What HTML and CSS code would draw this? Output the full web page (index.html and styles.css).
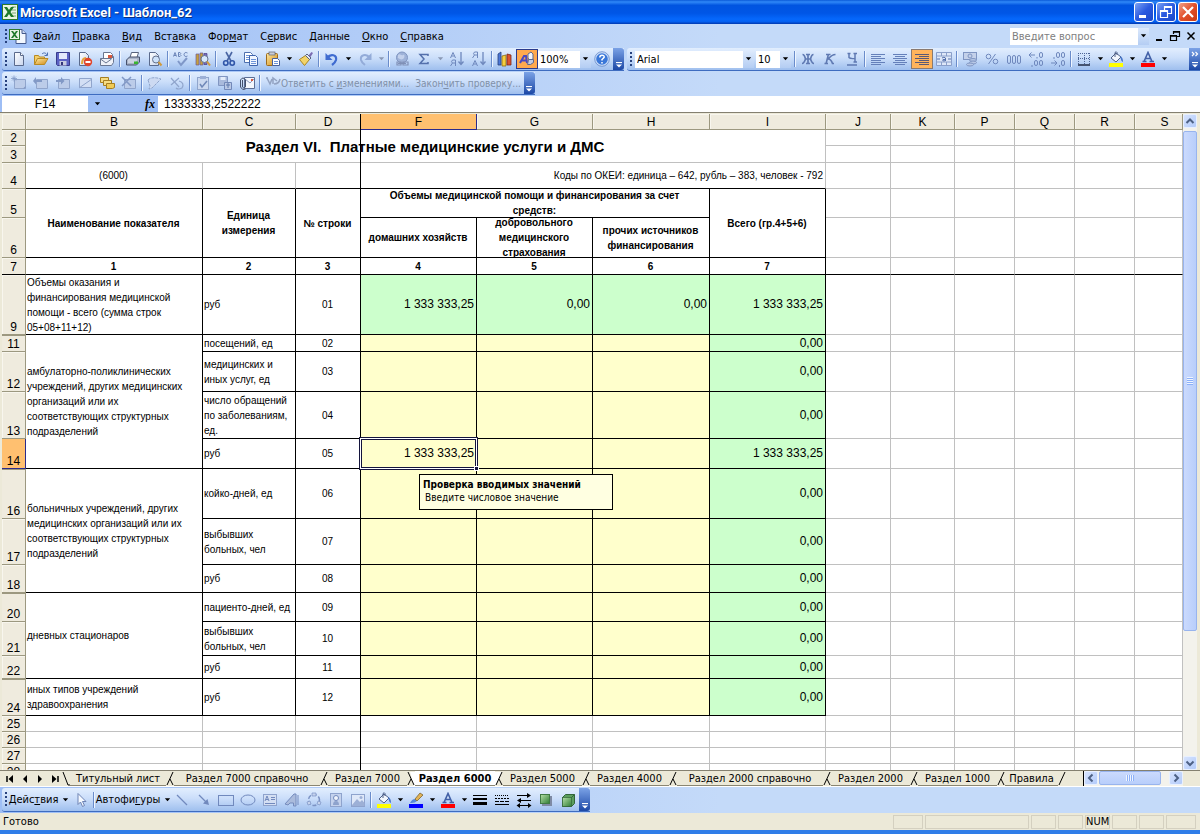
FILE: index.html
```html
<!DOCTYPE html>
<html lang="ru">
<head>
<meta charset="utf-8">
<title>Microsoft Excel - Шаблон_62</title>
<link rel="stylesheet" href="styles.css">
</head>
<body>
<svg class="defs" aria-hidden="true">
<defs>
<linearGradient id="g-page" x1="0" y1="0" x2="1" y2="1"><stop offset="0" stop-color="#fff"/><stop offset="1" stop-color="#c9d6ee"/></linearGradient>
<linearGradient id="g-green" x1="0" y1="0" x2="1" y2="1"><stop offset="0" stop-color="#b5e0a8"/><stop offset="1" stop-color="#2f7d35"/></linearGradient>
<linearGradient id="g-gold" x1="0" y1="0" x2="1" y2="1"><stop offset="0" stop-color="#ffe9a0"/><stop offset="1" stop-color="#d08a18"/></linearGradient>
<symbol id="i-excel" viewBox="0 0 16 16"><rect x=".5" y=".5" width="15" height="15" fill="#e9f4e4" stroke="#2d7a2d"/><path d="M10 3h4M10 6h4M10 9h4M10 12h4" stroke="#7aa874"/><path d="M2 3h3l2 3 2-3h3L8.500 8 12 13H9L7 10l-2 3H2l3.500-5z" fill="#1f7a2a"/></symbol>
<symbol id="i-book" viewBox="0 0 18 16"><path d="M7 1.500h6l4 4v10H7z" fill="#f4f8ff" stroke="#44598c"/><path d="M13 1.500v4h4" fill="#cdd9f2" stroke="#44598c"/><rect x=".5" y="1.500" width="10" height="10" fill="#e9f4e4" stroke="#2d7a2d"/><path d="M2 3h2l1.500 2L7 3h2L6.500 6.500 9 10H7L5.500 8 4 10H2l2.500-3.500z" fill="#1f7a2a"/></symbol>
<symbol id="i-new" viewBox="0 0 16 16"><path d="M3.500 1.500h6l3 3v10h-9z" fill="url(#g-page)" stroke="#5a6a8c"/><path d="M9.500 1.500v3h3" fill="#fff" stroke="#5a6a8c"/></symbol>
<symbol id="i-open" viewBox="0 0 16 16"><path d="M1.500 13.500v-9h4l1 1.500h5v2" fill="#f3cf6c" stroke="#b98a22"/><path d="M1.500 13.500 4.500 7.500H15l-3.500 6z" fill="url(#g-gold)" stroke="#b98a22"/><path d="M9 3c2-2 4-1 5 1m.500-2.500V4.500H11.500" fill="none" stroke="#4b6fb0"/></symbol>
<symbol id="i-save" viewBox="0 0 16 16"><path d="M1.500 1.500h13v13h-12l-1-1z" fill="#5b62c4" stroke="#383c8c"/><rect x="4" y="2" width="8" height="6" fill="#e3e9fb"/><rect x="4.500" y="10" width="7" height="4.500" fill="#c6cbe0"/><rect x="6" y="11" width="2" height="3" fill="#33357a"/></symbol>
<symbol id="i-perm" viewBox="0 0 16 16"><path d="M2.500 1.500h6l3 3v10h-9z" fill="url(#g-page)" stroke="#5a6a8c"/><path d="M5 13c0-4 2-6 4-6" fill="none" stroke="#e5a43c" stroke-width="2"/><circle cx="11" cy="11" r="4.200" fill="#e0452c"/><rect x="8.500" y="10" width="5" height="2" fill="#fff"/></symbol>
<symbol id="i-mail" viewBox="0 0 16 16"><path d="M4.500 1.500h7l2 2v6h-9z" fill="#fff" stroke="#6a7690"/><path d="M1.500 7.500h11l2-2v6l-2 3h-11z" fill="#eef1f8" stroke="#6a7690"/><path d="M1.500 8l5.500 4 5.500-4" fill="none" stroke="#6a7690"/><rect x="9" y="4" width="4" height="3" fill="#d8583e"/></symbol>
<symbol id="i-print" viewBox="0 0 16 16"><path d="M5 6.500l1.500-5h7l-1.500 5z" fill="#fff" stroke="#57627c"/><path d="M1.500 9l3-3h10v5l-3 3h-10z" fill="#aab4c8" stroke="#46516c"/><path d="M3 9h9M3 11h8" stroke="#eef2fa"/><rect x="9" y="10.500" width="4" height="2.500" fill="#38b52f"/></symbol>
<symbol id="i-preview" viewBox="0 0 16 16"><path d="M2.500 1.500h6l3 3v10h-9z" fill="url(#g-page)" stroke="#5a6a8c"/><circle cx="9" cy="8.500" r="3.500" fill="#cde2fb" stroke="#65728e"/><path d="M11.500 11l3 3.500" stroke="#d19a3b" stroke-width="2"/></symbol>
<symbol id="i-spell" viewBox="0 0 16 16"><path d="M.5 5.500l1.500-4 1.500 4M1 4.500h2M5.500 1.500v4h1.500q2-1 0-2 1.500-1 0-2zM14.500 2q-3-1.500-3.500 1.500.500 3 3.500 1.500" fill="none" stroke="#6b84b8"/><path d="M5 10l3 4 6-7" fill="none" stroke="#7f97c8" stroke-width="2"/></symbol>
<symbol id="i-research" viewBox="0 0 16 16"><path d="M1 3h3v11H1zM5 2h3v12H5z" fill="#c7a03b" stroke="#6a5a9a" stroke-width=".7"/><path d="M9 2.500h3v11H9z" fill="#7a6bc0" stroke="#463e86" stroke-width=".7"/><circle cx="9.500" cy="8" r="3.500" fill="#d7e8fc" stroke="#65728e"/><path d="M12 10.500l3 4" stroke="#d19a3b" stroke-width="2"/></symbol>
<symbol id="i-cut" viewBox="0 0 16 16"><path d="M5 1l5 9M11 1L6 10" stroke="#4a66a4" stroke-width="1.600"/><circle cx="4.800" cy="12" r="2.200" fill="none" stroke="#2f55a8" stroke-width="1.600"/><circle cx="11.200" cy="12" r="2.200" fill="none" stroke="#2f55a8" stroke-width="1.600"/></symbol>
<symbol id="i-copy" viewBox="0 0 16 16"><path d="M1.500 1.500h6l2 2v8h-8z" fill="#fff" stroke="#4d6fae"/><path d="M3 4.500h4M3 6.500h4M3 8.500h4" stroke="#6c93d8"/><path d="M6.500 4.500h6l2 2v8h-8z" fill="#f1f6ff" stroke="#3f64ac"/><path d="M8 8.500h5M8 10.500h5M8 12.500h5" stroke="#6c93d8"/></symbol>
<symbol id="i-paste" viewBox="0 0 16 16"><rect x="1.500" y="2.500" width="11" height="12" rx="1" fill="url(#g-gold)" stroke="#9c6a1c"/><rect x="4" y="1" width="6" height="3" fill="#c9ccd6" stroke="#5f6474" stroke-width=".7"/><path d="M7.500 7.500h5l2 2v5h-7z" fill="#fff" stroke="#48609a"/><path d="M9 10.500h4M9 12.500h4" stroke="#6c93d8"/></symbol>
<symbol id="i-brush" viewBox="0 0 16 16"><path d="M1.500 8.500l6-4 4 4-5 6z" fill="#f2d469" stroke="#a98420"/><path d="M7.500 4.500l4 4 1.500-1.500-4-4z" fill="#e7ebf5" stroke="#56637f"/><path d="M10.500 4.500l3-3.500 1.500 1-2.500 4z" fill="#7a6bb2"/></symbol>
<symbol id="i-undo" viewBox="0 0 16 16"><path d="M3 7c4-5 10-3 9 2-.5 2-2 3.500-4 5" fill="none" stroke="#3f6bd0" stroke-width="2.200"/><path d="M1.500 2v7h7z" fill="#3f6bd0"/></symbol>
<symbol id="i-redo" viewBox="0 0 16 16"><path d="M13 7c-4-5-10-3-9 2 .5 2 2 3.500 4 5" fill="none" stroke="#93abd8" stroke-width="2"/><path d="M14.500 2v7h-7z" fill="#93abd8"/></symbol>
<symbol id="i-link" viewBox="0 0 16 16"><circle cx="8" cy="6.500" r="5.500" fill="#9eb2d8" stroke="#8196c2"/><path d="M4 4c2-2 3 1 5 0s2 3 0 4-3 0-5-1" fill="#c3d1ec"/><path d="M4 12.500h8M3 11v3h4v-3zM9 11v3h5v-3z" fill="none" stroke="#8090b6" stroke-width="1.200"/></symbol>
<symbol id="i-sum" viewBox="0 0 16 16"><path d="M12 5V3.500H4L8 8l-4 4.500h8V11" fill="none" stroke="#5470ac" stroke-width="1.500"/></symbol>
<symbol id="i-sortaz" viewBox="0 0 16 16"><path d="M1.500 7l2.500-5.500L6.500 7M2.500 5h3M6.500 9v6M6.500 9h-3q-2 2 0 3h3M3.500 12l-2 3" fill="none" stroke="#6f88bd"/><path d="M12 1v12M9.500 10.500l2.500 3 2.500-3" fill="none" stroke="#6f88bd" stroke-width="1.300"/></symbol>
<symbol id="i-sortza" viewBox="0 0 16 16"><path d="M1.500 15l2.500-5.500L6.500 15M2.500 13h3M6.500 1v6M6.500 1h-3q-2 2 0 3h3M3.500 4l-2 3" fill="none" stroke="#6f88bd"/><path d="M12 1v12M9.500 10.500l2.500 3 2.500-3" fill="none" stroke="#6f88bd" stroke-width="1.300"/></symbol>
<symbol id="i-chart" viewBox="0 0 16 16"><path d="M1 3l3-2v13H1z" fill="#4c78d8" stroke="#27407c" stroke-width=".8"/><path d="M5 5l4-1v11H5z" fill="#f6cf3e" stroke="#8a6a13" stroke-width=".8"/><path d="M10 3l4 1v10h-4z" fill="#dc5330" stroke="#7c2614" stroke-width=".8"/></symbol>
<symbol id="i-draw" viewBox="0 0 16 16"><path d="M1 12L5 5h2l1 7M3 9.500h5" fill="none" stroke="#4a49c0" stroke-width="2"/><path d="M9 3l3-2 2 2v5l-3 2-2-3z" fill="#f0f3fa" stroke="#5c6890"/><path d="M9.500 8.500h5v3l-3 2h-3z" fill="#c3cbe0" stroke="#5c6890"/></symbol>
<symbol id="i-help" viewBox="0 0 16 16"><circle cx="8" cy="8" r="6.500" fill="#3a77d8" stroke="#c9dcf8" stroke-width="1.400"/><circle cx="8" cy="8" r="7.300" fill="none" stroke="#4971b8" stroke-width=".6"/><path d="M5.800 6.500q0-2.300 2.200-2.300 2.400 0 2.200 2Q9.500 7.500 8 8.500v1M8 11v1.400" fill="none" stroke="#fff" stroke-width="1.500"/></symbol>
<symbol id="i-note" viewBox="0 0 16 16"><path d="M3.500 4.500h11v9h-11z" fill="#bccce9" stroke="#90a5cc"/><path d="M12 13.500h2.500V11z" fill="#8299c6"/><path d="M0 3.500h6M3 .5v6M1 1.500l4 4M5 1.500l-4 4" stroke="#8299c6" stroke-width=".8"/></symbol>
<symbol id="i-prev" viewBox="0 0 16 16"><path d="M3.500 4.500h11v9h-11z" fill="#bccce9" stroke="#90a5cc"/><path d="M9 5H3V2L0 6l3 3.500V7h6z" fill="#8299c6"/></symbol>
<symbol id="i-next" viewBox="0 0 16 16"><path d="M3.500 4.500h11v9h-11z" fill="#bccce9" stroke="#90a5cc"/><path d="M1 5h5V2l3.500 4L6 9.500V7H1z" fill="#8299c6"/></symbol>
<symbol id="i-showc" viewBox="0 0 16 16"><path d="M2.500 3.500h12v9h-12z" fill="#d3dff4" stroke="#90a5cc"/><path d="M2 13L15 4" stroke="#90a5cc"/></symbol>
<symbol id="i-allc" viewBox="0 0 16 16"><path d="M1.500 2.500h8v5h-8z" fill="#f6dc84" stroke="#a67f22"/><path d="M4.500 5.500h8v5h-8z" fill="#f6dc84" stroke="#a67f22"/><path d="M7.500 8.500h8v4l-2 1h-6z" fill="#f0cb57" stroke="#a67f22"/></symbol>
<symbol id="i-delc" viewBox="0 0 16 16"><path d="M3.500 4.500h11v9h-11z" fill="#bccce9" stroke="#90a5cc"/><path d="M1 2l9 9M10 2l-9 9" stroke="#8299c6" stroke-width="1.500"/></symbol>
<symbol id="i-ink" viewBox="0 0 16 16"><path d="M1 5q4-4 13-1L5 13l-3 1 1-3z" fill="#cddaf2" stroke="#90a5cc" stroke-dasharray="3 1"/></symbol>
<symbol id="i-inkx" viewBox="0 0 16 16"><path d="M2 3l8 9M10 3L2 10M10 6q6 2 3 7-4 2-6 0" fill="none" stroke="#90a5cc" stroke-width="1.200"/></symbol>
<symbol id="i-task" viewBox="0 0 16 16"><rect x="2.500" y="2.500" width="11" height="12" fill="#ccd9f0" stroke="#90a5cc"/><rect x="5" y="1" width="6" height="3" fill="#9db0d6"/><path d="M5 9l2 3 5-6" fill="none" stroke="#7088b8" stroke-width="1.500"/></symbol>
<symbol id="i-saver" viewBox="0 0 16 16"><path d="M1.500 1.500h9v9h-9z" fill="#a9badc" stroke="#8196c2"/><path d="M3.500 2h5v3h-5z" fill="#e5edfa"/><path d="M7.500 7.500h7v7h-7z" fill="#b9c8e5" stroke="#7288b8"/><path d="M9 10h4M11 8v5" stroke="#5f78ac"/></symbol>
<symbol id="i-attach" viewBox="0 0 16 16"><path d="M5.500 2.500h10v11h-10z" fill="#f4f7fd" stroke="#5d6f96"/><path d="M6 4l5 4 4-4" fill="none" stroke="#8b9ac0"/><path d="M12 4h2v2h-2z" fill="#d8583e"/><path d="M3.500 5v7q1.500 2.500 3 0V5q-2.500-4-5 0v7q2 4 5 2" fill="none" stroke="#44506c"/></symbol>
<symbol id="i-reply" viewBox="0 0 16 16"><path d="M2 3l3 6 2-5M1 3h2M8 9V3l4 3M9 9q5 0 6-5" fill="none" stroke="#93a3c2" stroke-width="1.500"/></symbol>
<symbol id="i-bold" viewBox="0 0 16 16"><path d="M8 3v10M6 3.500h4M6 12.500h4M2.500 3.500q2 0 3 4.500h5q1-4.500 3-4.500M2 12.500q2 0 3.500-4.500M14 12.500q-2 0-3.500-4.500" fill="none" stroke="#5f79b2" stroke-width="1.700"/></symbol>
<symbol id="i-ital" viewBox="0 0 16 16"><path d="M6.500 3L4 13M4 3.500h4.500M2.500 12.500H6M13.500 3.500Q10 3.500 6 8q3 0 4.500 4.500H12" fill="none" stroke="#5f79b2" stroke-width="1.600"/></symbol>
<symbol id="i-under" viewBox="0 0 16 16"><path d="M5 2.500v4q1 1.500 6 1M11 2v9M3.500 2.500h3M9.500 2.500H13M9.500 11H13M3 14h10" fill="none" stroke="#5f79b2" stroke-width="1.500"/></symbol>
<symbol id="i-left" viewBox="0 0 16 16"><path d="M1 3.500h14M1 5.500h10M1 7.500h14M1 9.500h10M1 11.500h14M1 13.500h10" stroke="#6580ba"/></symbol>
<symbol id="i-center" viewBox="0 0 16 16"><path d="M1 3.500h14M3 5.500h10M1 7.500h14M3 9.500h10M1 11.500h14M3 13.500h10" stroke="#6580ba"/></symbol>
<symbol id="i-right" viewBox="0 0 16 16"><path d="M1 3.500h14M5 5.500h10M1 7.500h14M5 9.500h10M1 11.500h14M5 13.500h10" stroke="#5a5a78"/></symbol>
<symbol id="i-merge" viewBox="0 0 16 16"><path d="M.5 1.500h15v13H.5zM.5 5h15M.5 11h15M5.500 1.500V5M10.500 1.500V5M5.500 11v3.500M10.500 11v3.500" fill="#dde7f8" stroke="#8a9fca"/><path d="M1 8h3M15 8h-3M6 7q2-1.500 3.500 0v3M9 8.500H7q-1 1.500 1 1.500 1 0 1.500-1" fill="none" stroke="#5470ac"/></symbol>
<symbol id="i-money" viewBox="0 0 16 16"><rect x="1.500" y="1.500" width="13" height="7" fill="#c4d1ea" stroke="#7f95c2"/><circle cx="8" cy="5" r="2" fill="none" stroke="#7f95c2"/><ellipse cx="11" cy="9" rx="3.500" ry="1.500" fill="#b8c8e6" stroke="#7f95c2"/><ellipse cx="11" cy="11.500" rx="3.500" ry="1.500" fill="#b8c8e6" stroke="#7f95c2"/><ellipse cx="8" cy="13.500" rx="3.500" ry="1.500" fill="#b8c8e6" stroke="#7f95c2"/></symbol>
<symbol id="i-pct" viewBox="0 0 16 16"><circle cx="4.500" cy="5.500" r="2.300" fill="none" stroke="#6f88bd"/><circle cx="11.500" cy="10.500" r="2.300" fill="none" stroke="#6f88bd"/><path d="M11.500 3l-7 10" stroke="#6f88bd"/></symbol>
<symbol id="i-thou" viewBox="0 0 16 16"><g fill="none" stroke="#6f88bd"><rect x="1.500" y="4.500" width="3" height="8" rx="1.500"/><rect x="6.500" y="4.500" width="3" height="8" rx="1.500"/><rect x="11.500" y="4.500" width="3" height="8" rx="1.500"/></g></symbol>
<symbol id="i-inc" viewBox="0 0 16 16"><g fill="none" stroke="#6f88bd"><path d="M1 4h6M3.500 1.500L1 4l2.500 2.500M9 6v1.500"/><rect x="11.500" y="1.500" width="3" height="5" rx="1.500"/><rect x="6.500" y="9.500" width="3" height="5" rx="1.500"/><rect x="11.500" y="9.500" width="3" height="5" rx="1.500"/><path d="M4 14v2"/></g></symbol>
<symbol id="i-dec" viewBox="0 0 16 16"><g fill="none" stroke="#6f88bd"><path d="M1 12h6M4.500 9.500L7 12l-2.500 2.500M9.500 14v2M4 6v2"/><rect x="6.500" y="1.500" width="3" height="5" rx="1.500"/><rect x="11.500" y="1.500" width="3" height="5" rx="1.500"/><rect x="11.500" y="9.500" width="3" height="5" rx="1.500"/></g></symbol>
<symbol id="i-border" viewBox="0 0 16 16"><path d="M2.500 2v11M8.500 2v11M13.500 2v11M2 2.500h12M2 7.500h12" stroke="#4d6596" stroke-dasharray="1 1"/><path d="M2 14h12" stroke="#222b44" stroke-width="1.500"/></symbol>
<symbol id="i-fill" viewBox="0 0 16 16"><path d="M3 7l5-5 5 4-5 5z" fill="#f2f6fd" stroke="#4d5f86"/><path d="M7 6V1.500q1.500-1.500 2 0V4" fill="none" stroke="#4d5f86"/><path d="M12 5q3 1 3 6-2-1-2.500-4z" fill="#4574c8"/><rect x="1" y="12" width="14" height="4" fill="#ff0"/></symbol>
<symbol id="i-pen" viewBox="0 0 16 16"><path d="M2 11q2-4 5-4l2 2q-2 2.500-7 2z" fill="#5688d8"/><path d="M7 7l5-6 3 2-6 6z" fill="#e2b255" stroke="#7a6435" stroke-width=".8"/><rect x="1" y="12" width="14" height="4" fill="#00f"/></symbol>
<symbol id="i-color" viewBox="0 0 16 16"><path d="M4 10.500L8 1.500l4 9M5.500 7.500h5M2.500 10.500h4M9.500 10.500H14" fill="none" stroke="#415fa6" stroke-width="1.600"/><rect x="1" y="12" width="14" height="4" fill="#f00"/></symbol>
<symbol id="i-cursor" viewBox="0 0 16 16"><path d="M5 1.500v11l2.500-2.500 2 4.500 2-1-2-4H13z" fill="#f5f9ff" stroke="#6d83b4"/></symbol>
<symbol id="i-line" viewBox="0 0 16 16"><path d="M3 3l10 10" stroke="#7189bd" stroke-width="1.200"/></symbol>
<symbol id="i-arrow" viewBox="0 0 16 16"><path d="M3 3l7 7" stroke="#7189bd" stroke-width="1.200"/><path d="M13 13l-1.500-6-4.500 4.500z" fill="#7189bd"/></symbol>
<symbol id="i-rect" viewBox="0 0 16 16"><rect x=".5" y="3.500" width="15" height="10" fill="none" stroke="#7189bd"/></symbol>
<symbol id="i-oval" viewBox="0 0 16 16"><ellipse cx="8" cy="8" rx="7" ry="5" fill="none" stroke="#7189bd"/></symbol>
<symbol id="i-text" viewBox="0 0 16 16"><rect x="1.500" y="2.500" width="13" height="11" fill="#d4dff3" stroke="#8ea3cd"/><path d="M3 9l2-5 2 5M4 7.500h2M9 5.500h4M9 7.500h4M3 11.500h10" fill="none" stroke="#7189bd"/></symbol>
<symbol id="i-art" viewBox="0 0 16 16"><path d="M1 12L10 2h2v12H9.500v-3H6l-2 2z" fill="#aabbdc" stroke="#748bbd"/><path d="M14 3v10" stroke="#748bbd"/></symbol>
<symbol id="i-diag" viewBox="0 0 16 16"><circle cx="8" cy="8" r="5.500" fill="none" stroke="#7c93c4" stroke-width="1.500" stroke-dasharray="4 2"/><path d="M6 1h4v3H6zM1 10l3-1 1 3-3 1zM12 9l3 1-1 3-3-1z" fill="#c4d2ed" stroke="#7c93c4" stroke-width=".7"/></symbol>
<symbol id="i-clip" viewBox="0 0 16 16"><rect x="2.500" y="1.500" width="11" height="13" fill="#c4d2ed" stroke="#8ea3cd"/><circle cx="8" cy="6" r="2.500" fill="#eef3fc" stroke="#7189bd"/><path d="M5 13q0-4 3-4t3 4z" fill="#8ea3cd"/></symbol>
<symbol id="i-pic" viewBox="0 0 16 16"><rect x="1.500" y="2.500" width="13" height="12" fill="#dfe8f8" stroke="#8ea3cd"/><path d="M2 13l5-6 3 3 2-2 2.500 3v3H2z" fill="#9db0d6"/><circle cx="11" cy="5.500" r="1.500" fill="#9db0d6"/></symbol>
<symbol id="i-lw" viewBox="0 0 16 16"><path d="M1 3.500h14" stroke="#000"/><path d="M1 7h14" stroke="#000" stroke-width="2"/><path d="M1 11.500h14" stroke="#000" stroke-width="3"/></symbol>
<symbol id="i-dash" viewBox="0 0 16 16"><path d="M1 3.500h14" stroke="#000" stroke-dasharray="1 1"/><path d="M1 6.500h14" stroke="#000" stroke-dasharray="2 1"/><path d="M1 9.500h14" stroke="#000" stroke-dasharray="4 1"/><path d="M1 12.500h14" stroke="#000"/></symbol>
<symbol id="i-arrs" viewBox="0 0 16 16"><path d="M1 3.500h12M3 8.500h12M3 13.500h10" stroke="#000"/><path d="M11 1l4 2.500L11 6zM5 6L1 8.500 5 11zM4 11L.5 13.500 4 16zM12 11l3.500 2.500L12 16z"/></symbol>
<symbol id="i-shadow" viewBox="0 0 16 16"><rect x="4" y="4" width="10" height="10" fill="#7e8aa4"/><rect x="2.500" y="2.500" width="9" height="9" fill="url(#g-green)" stroke="#3f7a44"/></symbol>
<symbol id="i-3d" viewBox="0 0 16 16"><path d="M2.500 5.500l3-3h9v9l-3 3h-9z" fill="#5b9e5e" stroke="#33663a"/><rect x="2.500" y="5.500" width="9" height="9" fill="url(#g-green)" stroke="#33663a" stroke-width=".7"/><path d="M11.500 5.500l3-3" stroke="#33663a"/></symbol>
<symbol id="i-down" viewBox="0 0 8 4"><path d="M1 0h6L4 3.500z"/></symbol>
<symbol id="i-cap" viewBox="0 0 8 6"><path d="M1 .5h6" stroke="#fff" stroke-width="1.200"/><path d="M1 2.500h6L4 5.500z" fill="#fff"/></symbol>
</defs>
</svg>

<header class="titlebar">
  <svg class="ico"><use href="#i-excel"/></svg>
  <h1>Microsoft Excel - Шаблон_62</h1>
  <div class="winbtns">
    <button class="win" aria-label="Свернуть"><svg viewBox="0 0 16 16"><path d="M3 11h7v3H3z" fill="#fff"/></svg></button>
    <button class="win" aria-label="Восстановить"><svg viewBox="0 0 16 16"><path d="M6.500 6V2.500h7v7H10M6 3.500h8" fill="none" stroke="#fff" stroke-width="1.200"/><path d="M2.500 6.500h7v7h-7zM2 7.500h8" fill="none" stroke="#fff" stroke-width="1.200"/></svg></button>
    <button class="win close" aria-label="Закрыть"><svg viewBox="0 0 16 16"><path d="M3 3l10 10M13 3L3 13" stroke="#fff" stroke-width="2.200"/></svg></button>
  </div>
</header>

<nav class="menubar">
  <span class="grip"></span>
  <svg class="book"><use href="#i-book"/></svg>
  <button><u>Ф</u>айл</button><button><u>П</u>равка</button><button><u>В</u>ид</button><button>Вст<u>а</u>вка</button><button>Фор<u>м</u>ат</button><button>С<u>е</u>рвис</button><button><u>Д</u>анные</button><button><u>О</u>кно</button><button><u>С</u>правка</button>
  <div class="ask"><input type="text" placeholder="Введите вопрос" aria-label="Введите вопрос"><button class="drop" aria-label="Список"><svg><use href="#i-down"/></svg></button></div>
  <div class="docbtns">
    <button aria-label="Свернуть окно"><svg viewBox="0 0 12 12"><path d="M3 9h6v2H3z"/></svg></button>
    <button aria-label="Восстановить окно"><svg viewBox="0 0 12 12"><path d="M4.500 4V1.500h6v5H8M4 2.200h7M1.500 5.500h6v5h-6zM1 6.200h7" fill="none" stroke="#000" stroke-width="1.200"/></svg></button>
    <button aria-label="Закрыть окно"><svg viewBox="0 0 12 12"><path d="M2.500 2.500l7 7M9.500 2.500l-7 7" stroke="#000" stroke-width="1.500"/></svg></button>
  </div>
</nav>

<div class="barrow">
  <div class="toolbar" role="toolbar" aria-label="Стандартная">
    <span class="grip"></span>
    <button class="tb" aria-label="Создать"><svg><use href="#i-new"/></svg></button>
    <button class="tb" aria-label="Открыть"><svg><use href="#i-open"/></svg></button>
    <button class="tb" aria-label="Сохранить"><svg><use href="#i-save"/></svg></button>
    <button class="tb" aria-label="Разрешения"><svg><use href="#i-perm"/></svg></button>
    <button class="tb" aria-label="Сообщение"><svg><use href="#i-mail"/></svg></button>
    <span class="sep"></span>
    <button class="tb" aria-label="Печать"><svg><use href="#i-print"/></svg></button>
    <button class="tb" aria-label="Просмотр"><svg><use href="#i-preview"/></svg></button>
    <span class="sep"></span>
    <button class="tb" aria-label="Орфография"><svg><use href="#i-spell"/></svg></button>
    <button class="tb" aria-label="Справочники"><svg><use href="#i-research"/></svg></button>
    <span class="sep"></span>
    <button class="tb" aria-label="Вырезать"><svg><use href="#i-cut"/></svg></button>
    <button class="tb" aria-label="Копировать"><svg><use href="#i-copy"/></svg></button>
    <button class="tb" aria-label="Вставить"><svg><use href="#i-paste"/></svg></button>
    <button class="dd" aria-label="Варианты вставки"><svg><use href="#i-down"/></svg></button>
    <button class="tb" aria-label="Формат по образцу"><svg><use href="#i-brush"/></svg></button>
    <span class="sep"></span>
    <button class="tb" aria-label="Отменить"><svg><use href="#i-undo"/></svg></button>
    <button class="dd" aria-label="Список отмены"><svg><use href="#i-down"/></svg></button>
    <button class="tb" aria-label="Вернуть"><svg><use href="#i-redo"/></svg></button>
    <button class="dd off" aria-label="Список возврата"><svg><use href="#i-down"/></svg></button>
    <span class="sep"></span>
    <button class="tb" aria-label="Гиперссылка"><svg><use href="#i-link"/></svg></button>
    <button class="tb" aria-label="Автосумма"><svg><use href="#i-sum"/></svg></button>
    <button class="dd off" aria-label="Функции"><svg><use href="#i-down"/></svg></button>
    <button class="tb" aria-label="По возрастанию"><svg><use href="#i-sortaz"/></svg></button>
    <button class="tb" aria-label="По убыванию"><svg><use href="#i-sortza"/></svg></button>
    <span class="sep"></span>
    <button class="tb" aria-label="Диаграмма"><svg><use href="#i-chart"/></svg></button>
    <button class="tb on" aria-label="Рисование"><svg><use href="#i-draw"/></svg></button>
    <div class="combo zoom"><input type="text" value="100%" aria-label="Масштаб"><button class="drop" aria-label="Масштаб, список"><svg><use href="#i-down"/></svg></button></div>
    <button class="tb" aria-label="Помощь"><svg><use href="#i-help"/></svg></button>
    <button class="cap" aria-label="Параметры панели"><svg><use href="#i-cap"/></svg></button>
  </div>
  <div class="toolbar grow" role="toolbar" aria-label="Форматирование">
    <span class="grip"></span>
    <div class="combo font"><input type="text" value="Arial" aria-label="Шрифт"><button class="drop" aria-label="Шрифт, список"><svg><use href="#i-down"/></svg></button></div>
    <div class="combo size"><input type="text" value="10" aria-label="Размер"><button class="drop" aria-label="Размер, список"><svg><use href="#i-down"/></svg></button></div>
    <span class="sep"></span>
    <button class="tb" aria-label="Полужирный"><svg><use href="#i-bold"/></svg></button>
    <button class="tb" aria-label="Курсив"><svg><use href="#i-ital"/></svg></button>
    <button class="tb" aria-label="Подчеркнутый"><svg><use href="#i-under"/></svg></button>
    <span class="sep"></span>
    <button class="tb" aria-label="По левому краю"><svg><use href="#i-left"/></svg></button>
    <button class="tb" aria-label="По центру"><svg><use href="#i-center"/></svg></button>
    <button class="tb sel" aria-label="По правому краю"><svg><use href="#i-right"/></svg></button>
    <button class="tb" aria-label="Объединить"><svg><use href="#i-merge"/></svg></button>
    <span class="sep"></span>
    <button class="tb" aria-label="Денежный формат"><svg><use href="#i-money"/></svg></button>
    <button class="tb" aria-label="Процентный формат"><svg><use href="#i-pct"/></svg></button>
    <button class="tb" aria-label="Формат с разделителями"><svg><use href="#i-thou"/></svg></button>
    <button class="tb" aria-label="Увеличить разрядность"><svg><use href="#i-inc"/></svg></button>
    <button class="tb" aria-label="Уменьшить разрядность"><svg><use href="#i-dec"/></svg></button>
    <span class="sep"></span>
    <button class="tb" aria-label="Границы"><svg><use href="#i-border"/></svg></button>
    <button class="dd" aria-label="Список границ"><svg><use href="#i-down"/></svg></button>
    <button class="tb" aria-label="Цвет заливки"><svg><use href="#i-fill"/></svg></button>
    <button class="dd" aria-label="Список заливок"><svg><use href="#i-down"/></svg></button>
    <button class="tb" aria-label="Цвет шрифта"><svg><use href="#i-color"/></svg></button>
    <button class="dd" aria-label="Список цветов"><svg><use href="#i-down"/></svg></button>
    <button class="cap more" aria-label="Параметры панели"><svg viewBox="0 0 8 6"><path d="M1 1l2 2-2 2M4.500 1l2 2-2 2" fill="none" stroke="#fff" stroke-width="1.200"/></svg><svg><use href="#i-cap"/></svg></button>
  </div>
</div>

<div class="barrow">
  <div class="toolbar" role="toolbar" aria-label="Рецензирование">
    <span class="grip"></span>
    <button class="tb" aria-label="Создать примечание"><svg><use href="#i-note"/></svg></button>
    <button class="tb" aria-label="Предыдущее примечание"><svg><use href="#i-prev"/></svg></button>
    <button class="tb" aria-label="Следующее примечание"><svg><use href="#i-next"/></svg></button>
    <button class="tb" aria-label="Показать примечание"><svg><use href="#i-showc"/></svg></button>
    <button class="tb" aria-label="Показать все примечания"><svg><use href="#i-allc"/></svg></button>
    <button class="tb" aria-label="Удалить примечание"><svg><use href="#i-delc"/></svg></button>
    <span class="sep"></span>
    <button class="tb" aria-label="Показать рукописные"><svg><use href="#i-ink"/></svg></button>
    <button class="tb" aria-label="Удалить рукописные"><svg><use href="#i-inkx"/></svg></button>
    <span class="sep"></span>
    <button class="tb" aria-label="Создать задачу"><svg><use href="#i-task"/></svg></button>
    <button class="tb" aria-label="Обновить файл"><svg><use href="#i-saver"/></svg></button>
    <button class="tb" aria-label="Сообщение с вложением"><svg><use href="#i-attach"/></svg></button>
    <span class="sep"></span>
    <button class="txt off"><svg><use href="#i-reply"/></svg><span>Ответить с <u>и</u>зменениями...</span></button>
    <button class="txt off"><span>Закон<u>ч</u>ить проверку...</span></button>
    <button class="cap" aria-label="Параметры панели"><svg><use href="#i-cap"/></svg></button>
  </div>
</div>

<div class="formula">
  <input class="name" type="text" value="F14" aria-label="Имя ячейки">
  <button class="namedrop" aria-label="Список имен"><svg><use href="#i-down"/></svg></button>
  <button class="fx" aria-label="Вставка функции">fx</button>
  <input class="fval" type="text" value="1333333,2522222" aria-label="Строка формул">
</div>

<main class="work">
  <div class="sheet">
    <table>
      <colgroup><col class="c-head"><col class="c-b"><col class="c-c"><col class="c-j"><col class="c-f"><col class="c-f"><col class="c-h"><col class="c-f"><col class="c-j"><col class="c-k"><col class="c-p"><col class="c-p"><col class="c-p"><col></colgroup>
      <thead><tr class="cols"><th></th><th>B</th><th>C</th><th>D</th><th class="cur">F</th><th>G</th><th>H</th><th>I</th><th>J</th><th>K</th><th>P</th><th>Q</th><th>R</th><th><div class="last">S</div></th></tr></thead>
      <tbody>
      <tr class="h16"><th>2</th><td class="title" colspan="7" rowspan="2">Раздел VI.&nbsp; Платные медицинские услуги и ДМС</td><td></td><td></td><td></td><td></td><td></td><td></td></tr>
      <tr class="h17"><th>3</th><td></td><td></td><td></td><td></td><td></td><td></td></tr>
      <tr class="h26 pre"><th>4</th><td class="c">(6000)</td><td></td><td></td><td class="r" colspan="4">Коды по ОКЕИ: единица – 642, рубль – 383, человек - 792</td><td></td><td></td><td></td><td></td><td></td><td></td></tr>
      <tr class="h29"><th>5</th><td class="k hd" rowspan="2">Наименование показателя</td><td class="k hd" rowspan="2">Единица<br>измерения</td><td class="k hd" rowspan="2">№ строки</td><td class="k hd" colspan="3"><div class="clip h28">Объемы медицинской помощи и финансирования за счет<br>средств:</div></td><td class="k hd" rowspan="2">Всего (гр.4+5+6)</td><td></td><td></td><td></td><td></td><td></td><td></td></tr>
      <tr class="h40"><th>6</th><td class="k hd">домашних хозяйств</td><td class="k hd"><div class="clip h39">добровольного<br>медицинского<br>страхования</div></td><td class="k hd">прочих источников<br>финансирования</td><td></td><td></td><td></td><td></td><td></td><td></td></tr>
      <tr class="h17 freeze"><th>7</th><td class="k hd">1</td><td class="k hd">2</td><td class="k hd">3</td><td class="k hd">4</td><td class="k hd">5</td><td class="k hd">6</td><td class="k hd">7</td><td></td><td></td><td></td><td></td><td></td><td></td></tr>
      <tr class="h60"><th>9</th><td class="k"><div class="clip h59">Объемы оказания и<br>финансирования медицинской<br>помощи - всего (сумма строк<br>05+08+11+12)</div></td><td class="k">руб</td><td class="k c">01</td><td class="k g">1 333 333,25</td><td class="k g">0,00</td><td class="k g">0,00</td><td class="k g">1 333 333,25</td><td></td><td></td><td></td><td></td><td></td><td></td></tr>
      <tr class="h17 gap"><th>11</th><td class="k" rowspan="4">амбулаторно-поликлинических<br>учреждений, других медицинских<br>организаций или их<br>соответствующих структурных<br>подразделений</td><td class="k">посещений, ед</td><td class="k c">02</td><td class="k y"></td><td class="k y"></td><td class="k y"></td><td class="k g">0,00</td><td></td><td></td><td></td><td></td><td></td><td></td></tr>
      <tr class="h40"><th>12</th><td class="k">медицинских и<br>иных услуг, ед</td><td class="k c">03</td><td class="k y"></td><td class="k y"></td><td class="k y"></td><td class="k g">0,00</td><td></td><td></td><td></td><td></td><td></td><td></td></tr>
      <tr class="h47"><th>13</th><td class="k">число обращений<br>по заболеваниям,<br>ед.</td><td class="k c">04</td><td class="k y"></td><td class="k y"></td><td class="k y"></td><td class="k g">0,00</td><td></td><td></td><td></td><td></td><td></td><td></td></tr>
      <tr class="h30"><th class="cur">14</th><td class="k">руб</td><td class="k c">05</td><td class="k y active">1 333 333,25<div class="cellbox"><i></i></div><div class="tip" role="tooltip"><b>Проверка вводимых значений</b><span>Введите числовое значение</span></div></td><td class="k y"></td><td class="k y"></td><td class="k g">1 333 333,25</td><td></td><td></td><td></td><td></td><td></td><td></td></tr>
      <tr class="h50 gap"><th>16</th><td class="k" rowspan="3">больничных учреждений, других<br>медицинских организаций или их<br>соответствующих структурных<br>подразделений</td><td class="k">койко-дней, ед</td><td class="k c">06</td><td class="k y"></td><td class="k y"></td><td class="k y"></td><td class="k g">0,00</td><td></td><td></td><td></td><td></td><td></td><td></td></tr>
      <tr class="h46"><th>17</th><td class="k">выбывших<br>больных, чел</td><td class="k c">07</td><td class="k y"></td><td class="k y"></td><td class="k y"></td><td class="k g">0,00</td><td></td><td></td><td></td><td></td><td></td><td></td></tr>
      <tr class="h28"><th>18</th><td class="k">руб</td><td class="k c">08</td><td class="k y"></td><td class="k y"></td><td class="k y"></td><td class="k g">0,00</td><td></td><td></td><td></td><td></td><td></td><td></td></tr>
      <tr class="h29 gap"><th>20</th><td class="k" rowspan="3">дневных стационаров</td><td class="k">пациенто-дней, ед</td><td class="k c">09</td><td class="k y"></td><td class="k y"></td><td class="k y"></td><td class="k g">0,00</td><td></td><td></td><td></td><td></td><td></td><td></td></tr>
      <tr class="h34"><th>21</th><td class="k">выбывших<br>больных, чел</td><td class="k c">10</td><td class="k y"></td><td class="k y"></td><td class="k y"></td><td class="k g">0,00</td><td></td><td></td><td></td><td></td><td></td><td></td></tr>
      <tr class="h23"><th>22</th><td class="k">руб</td><td class="k c">11</td><td class="k y"></td><td class="k y"></td><td class="k y"></td><td class="k g">0,00</td><td></td><td></td><td></td><td></td><td></td><td></td></tr>
      <tr class="h37 gap"><th>24</th><td class="k">иных типов учреждений<br>здравоохранения</td><td class="k">руб</td><td class="k c">12</td><td class="k y"></td><td class="k y"></td><td class="k y"></td><td class="k g">0,00</td><td></td><td></td><td></td><td></td><td></td><td></td></tr>
      <tr class="h16"><th>25</th><td></td><td></td><td></td><td></td><td></td><td></td><td></td><td></td><td></td><td></td><td></td><td></td><td></td></tr>
      <tr class="h16"><th>26</th><td></td><td></td><td></td><td></td><td></td><td></td><td></td><td></td><td></td><td></td><td></td><td></td><td></td></tr>
      <tr class="h16"><th>27</th><td></td><td></td><td></td><td></td><td></td><td></td><td></td><td></td><td></td><td></td><td></td><td></td><td></td></tr>
      <tr class="h16"><th>28</th><td></td><td></td><td></td><td></td><td></td><td></td><td></td><td></td><td></td><td></td><td></td><td></td><td></td></tr>
      </tbody>
    </table>
    <div class="split"></div>
  </div>
  <div class="vscroll">
    <button class="sb" aria-label="Вверх"><svg viewBox="0 0 10 10"><path d="M1.500 7L5 3.500 8.500 7" fill="none" stroke="#4d6185" stroke-width="2"/></svg></button>
    <div class="vtrack"><div class="vthumb"><span></span></div></div>
    <button class="sb" aria-label="Вниз"><svg viewBox="0 0 10 10"><path d="M1.500 3.500L5 7l3.500-3.500" fill="none" stroke="#4d6185" stroke-width="2"/></svg></button>
  </div>
</main>

<div class="tabs">
  <div class="tabnav">
    <button aria-label="Первый лист"><svg viewBox="0 0 8 8"><path d="M1 1v6" stroke="#000" stroke-width="1.500"/><path d="M7 0v8L2.500 4z"/></svg></button>
    <button aria-label="Предыдущий лист"><svg viewBox="0 0 8 8"><path d="M6 0v8L2 4z"/></svg></button>
    <button aria-label="Следующий лист"><svg viewBox="0 0 8 8"><path d="M2 0v8l4-4z"/></svg></button>
    <button aria-label="Последний лист"><svg viewBox="0 0 8 8"><path d="M7 1v6" stroke="#000" stroke-width="1.500"/><path d="M1 0v8l4.500-4z"/></svg></button>
  </div>
  <svg class="slash" viewBox="0 0 8 16"><path d="M1 1l5 13h2" fill="none" stroke="#000"/></svg>
  <button class="tab first">Титульный лист</button><svg class="slash" viewBox="0 0 8 16"><path d="M7 1L1 14M4 8l3 6" fill="none" stroke="#000"/></svg>
  <button class="tab wide">Раздел 7000 справочно</button><svg class="slash" viewBox="0 0 8 16"><path d="M7 1L1 14M4 8l3 6" fill="none" stroke="#000"/></svg>
  <button class="tab">Раздел 7000</button><svg class="slash" viewBox="0 0 8 16"><path d="M3 1H8V15H7z" fill="#fff"/><path d="M1 1l6 13M4 8l-3 6" fill="none" stroke="#000"/></svg>
  <button class="tab active-tab">Раздел 6000</button><svg class="slash" viewBox="0 0 8 16"><path d="M0 1h7L1 14H0z" fill="#fff"/><path d="M7 1L1 14M4 8l3 6" fill="none" stroke="#000"/></svg>
  <button class="tab">Раздел 5000</button><svg class="slash" viewBox="0 0 8 16"><path d="M7 1L1 14M4 8l3 6" fill="none" stroke="#000"/></svg>
  <button class="tab">Раздел 4000</button><svg class="slash" viewBox="0 0 8 16"><path d="M7 1L1 14M4 8l3 6" fill="none" stroke="#000"/></svg>
  <button class="tab wide">Раздел 2000 справочно</button><svg class="slash" viewBox="0 0 8 16"><path d="M7 1L1 14M4 8l3 6" fill="none" stroke="#000"/></svg>
  <button class="tab">Раздел 2000</button><svg class="slash" viewBox="0 0 8 16"><path d="M7 1L1 14M4 8l3 6" fill="none" stroke="#000"/></svg>
  <button class="tab">Раздел 1000</button><svg class="slash" viewBox="0 0 8 16"><path d="M7 1L1 14M4 8l3 6" fill="none" stroke="#000"/></svg>
  <button class="tab short">Правила</button><svg class="slash" viewBox="0 0 8 16"><path d="M7 1L1 14" fill="none" stroke="#000"/></svg>
  <div class="hscroll">
    <button class="sb" aria-label="Влево"><svg viewBox="0 0 10 10"><path d="M6.500 1.500L3 5l3.500 3.500" fill="none" stroke="#4d6185" stroke-width="2"/></svg></button>
    <div class="htrack"><div class="hthumb"><span></span></div></div>
    <button class="sb" aria-label="Вправо"><svg viewBox="0 0 10 10"><path d="M3.500 1.500L7 5 3.500 8.500" fill="none" stroke="#4d6185" stroke-width="2"/></svg></button>
  </div>
</div>

<div class="barrow draw">
  <div class="toolbar" role="toolbar" aria-label="Рисование">
    <span class="grip"></span>
    <button class="txt act">Дейс<u>т</u>вия<svg class="tri"><use href="#i-down"/></svg></button>
    <button class="tb" aria-label="Выбор объектов"><svg><use href="#i-cursor"/></svg></button>
    <span class="sep"></span>
    <button class="txt shapes">Автофи<u>г</u>уры<svg class="tri"><use href="#i-down"/></svg></button>
    <button class="tb" aria-label="Линия"><svg><use href="#i-line"/></svg></button>
    <button class="tb" aria-label="Стрелка"><svg><use href="#i-arrow"/></svg></button>
    <button class="tb" aria-label="Прямоугольник"><svg><use href="#i-rect"/></svg></button>
    <button class="tb" aria-label="Овал"><svg><use href="#i-oval"/></svg></button>
    <button class="tb" aria-label="Надпись"><svg><use href="#i-text"/></svg></button>
    <button class="tb" aria-label="Объект WordArt"><svg><use href="#i-art"/></svg></button>
    <button class="tb" aria-label="Схема"><svg><use href="#i-diag"/></svg></button>
    <button class="tb" aria-label="Картинка"><svg><use href="#i-clip"/></svg></button>
    <button class="tb" aria-label="Рисунок"><svg><use href="#i-pic"/></svg></button>
    <span class="sep"></span>
    <button class="tb" aria-label="Заливка"><svg><use href="#i-fill"/></svg></button>
    <button class="dd" aria-label="Список заливок"><svg><use href="#i-down"/></svg></button>
    <button class="tb" aria-label="Цвет линий"><svg><use href="#i-pen"/></svg></button>
    <button class="dd" aria-label="Список линий"><svg><use href="#i-down"/></svg></button>
    <button class="tb" aria-label="Цвет текста"><svg><use href="#i-color"/></svg></button>
    <button class="dd" aria-label="Список цветов"><svg><use href="#i-down"/></svg></button>
    <button class="tb" aria-label="Тип линии"><svg><use href="#i-lw"/></svg></button>
    <button class="tb" aria-label="Тип штриха"><svg><use href="#i-dash"/></svg></button>
    <button class="tb" aria-label="Вид стрелки"><svg><use href="#i-arrs"/></svg></button>
    <button class="tb" aria-label="Тень"><svg><use href="#i-shadow"/></svg></button>
    <button class="tb" aria-label="Объем"><svg><use href="#i-3d"/></svg></button>
    <button class="cap" aria-label="Параметры панели"><svg><use href="#i-cap"/></svg></button>
  </div>
</div>

<footer class="status">
  <span class="msg">Готово</span>
  <span class="pane w30"></span><span class="pane w104"></span><span class="pane"></span><span class="pane"></span><span class="pane">NUM</span><span class="pane"></span><span class="pane"></span><span class="pane w30"></span>
</footer>
</body>
</html>
```

FILE: styles.css
```css
* { box-sizing: border-box; }
body {
  margin: 0;
  height: 100vh;
  display: flex;
  flex-direction: column;
  overflow: hidden;
  font: 11px "DejaVu Sans Condensed", "DejaVu Sans", sans-serif;
  color: #000;
  background: #ece9d8;
  border-bottom: 4px solid #2f7de8;
}
button, input { font: inherit; color: inherit; border: 0; padding: 0; margin: 0; background: none; border-radius: 0; }
button { display: flex; align-items: center; justify-content: center; white-space: nowrap; flex: none; }
.defs { position: absolute; width: 0; height: 0; }
u { text-underline-offset: 1px; }

/* title bar */
.titlebar {
  flex: none;
  height: 24px;
  display: flex;
  align-items: center;
  gap: 2px;
  padding: 0 2px;
  background: linear-gradient(#0a5ad8, #2f88f8 8%, #0054e0 22%, #0056e6 55%, #0568fc 80%, #0560f0 90%, #0038b0);
}
.titlebar h1 { margin: 0; flex: 1; font: bold 13px Roboto, sans-serif; color: #fff; text-shadow: 1px 1px 0 #0a2f80; }
.ico { width: 16px; height: 16px; }
.winbtns { display: flex; gap: 2px; }
.win { width: 20px; height: 20px; border: 1px solid #fff; border-radius: 3px; background: linear-gradient(135deg, #7ba2f4, #2b5ae0 50%, #1c48c8); }
.win svg { width: 16px; height: 16px; }
.win.close { background: linear-gradient(135deg, #f0a088, #e2502a 50%, #c83a14); }

/* menu */
.menubar { flex: none; height: 24px; display: flex; align-items: center; padding: 0 3px 0 4px; background: linear-gradient(90deg, #9ebef5, #c4daf9 60%); }
.menubar > button { padding: 0 6px; height: 20px; }
.grip { flex: none; width: 2px; height: 15px; margin: 0 1px; background: repeating-linear-gradient(#27417e 0 2px, transparent 2px 4px); }
.book { width: 18px; height: 16px; margin-left: 1px; }
.ask { margin-left: auto; display: flex; width: 139px; height: 17px; background: #fff; }
.ask input { flex: 1; min-width: 0; padding: 0 2px; }
.ask input::placeholder { color: #808080; opacity: 1; }
.drop { width: 11px; background: linear-gradient(#dce9fc, #b4cdf3); }
.drop svg, .dd svg, .tri, .namedrop svg { width: 7px; height: 4px; flex: none; }
.docbtns { display: flex; gap: 4px; padding-left: 4px; }
.docbtns svg { width: 12px; height: 12px; }

/* toolbars */
.barrow { flex: none; display: flex; gap: 3px; height: 24px; padding-left: 2px; background: linear-gradient(90deg, #9ebef5, #c4daf9 60%); }
.toolbar {
  display: flex;
  align-items: center;
  height: 23px;
  padding-left: 2px;
  border-radius: 3px 0 0 3px;
  border-bottom: 1px solid #3e6cc0;
  background: linear-gradient(#e2eefe, #cbdefa 45%, #9fbfee);
}
.toolbar.grow { flex: 1; min-width: 0; }
.tb { width: 22px; height: 20px; }
.tb svg, .txt svg { width: 16px; height: 16px; flex: none; }
.tb.on { background: #ffa94e; border: 1px solid #2a3a8c; }
.tb.sel { background: #ffb45c; border: 1px solid #8a7a70; }
.dd { width: 11px; height: 20px; }
.grow .dd, .draw .dd { width: 10px; }
.off { color: #8a98b4; }
.dd.off svg { fill: #8a98b4; }
.sep { flex: none; width: 1px; height: 16px; margin: 0 2px 0 1px; background: #6a8ccb; box-shadow: 1px 0 #eef5ff; }
.combo { flex: none; display: flex; height: 17px; background: #fff; }
.combo input { flex: 1; min-width: 0; padding: 0 2px; }
.zoom { width: 53px; }
.font { width: 119px; margin: 0 2px; }
.size { width: 35px; margin-right: 2px; }
.cap { align-self: stretch; width: 11px; margin-left: auto; background: linear-gradient(#7ba2e6, #1c48a6); border-radius: 0 3px 3px 0; align-items: flex-end; padding-bottom: 2px; }
.cap svg { width: 8px; height: 6px; }
.cap.more { flex-direction: column; justify-content: space-between; align-items: center; padding-top: 3px; border-radius: 0; }
.txt { height: 20px; padding: 0 3px; }
.txt.off { color: #8090a8; font-size: 10px; }
.tri { margin-left: 4px; }
.txt .tri { width: 7px; height: 4px; }

/* formula bar */
.formula { flex: none; display: flex; height: 16px; padding-left: 2px; background: #9ebef5; font: 12px "Liberation Sans", Arial, sans-serif; }
.name { width: 86px; background: #fff; text-align: center; }
.namedrop { width: 18px; }
.fx { width: 52px; padding-right: 3px; justify-content: flex-end; font: italic bold 12px "Liberation Serif", serif; }
.fval { flex: 1; min-width: 0; background: #fff; padding: 0 6px; }

/* worksheet */
.work { flex: 1; min-height: 0; display: flex; padding: 1px 3px 0 2px; background: #ece9d8; border-top: 1px solid #848070; }
.sheet { flex: 1; min-width: 0; overflow: hidden; position: relative; background: #fff; font: 10px/15px "Liberation Sans", Arial, sans-serif; }
table { width: 100%; table-layout: fixed; border-collapse: separate; border-spacing: 0; }
.c-head { width: 24px; } .c-b { width: 177px; } .c-c { width: 93px; } .c-j { width: 65px; }
.c-f { width: 116px; } .c-h { width: 117px; } .c-k { width: 64px; } .c-p { width: 60px; }
th, td { padding: 0 2px 0 1px; border: 0 solid #c0c0c0; border-width: 0 1px 1px 0; white-space: nowrap; text-align: left; }
th { font: 12px/14px "Liberation Sans", Arial, sans-serif; text-align: center; padding: 0; background: #efebde; border-color: #9c9880; box-shadow: inset 1px 1px #f8f6ee; }
tbody th { vertical-align: bottom; }
thead th { height: 16px; }
th.cur { background: #ffc070; border-color: #2a2a8c; box-shadow: none; }
.last { padding-left: 12px; }
.gap th { box-shadow: inset 0 1px #9c9880; }
.title { font-size: 15px; font-weight: bold; text-align: center; }
.c, .hd { text-align: center; }
.r { text-align: right; }
.k { border-color: #000; }
.pre td:nth-child(-n+5) { border-bottom-color: #000; }
.hd { font-weight: bold; }
.freeze th, .freeze td { border-bottom-color: #000; }
.g, .y { font-size: 12px; text-align: right; background: #cfc; }
.y { background: #ffc; }
.clip { display: flex; flex-direction: column; justify-content: center; overflow: hidden; }
.h16 { height: 16px; } .h17 { height: 17px; } .h23 { height: 23px; } .h26 { height: 26px; }
.h28 { height: 28px; } .h29 { height: 29px; } .h30 { height: 30px; } .h34 { height: 34px; }
.h37 { height: 37px; } .h39 { height: 39px; } .h40 { height: 40px; } .h46 { height: 46px; }
.h47 { height: 47px; } .h50 { height: 50px; } .h59 { height: 59px; } .h60 { height: 60px; }
.split { position: absolute; top: 0; bottom: 0; left: 358px; width: 1px; background: #000; }
.active { position: relative; }
.cellbox { position: absolute; inset: -2px; border: 1px solid #14143c; box-shadow: inset 0 0 0 1px #fff, inset 0 0 0 2px #14143c; z-index: 2; }
.cellbox i { position: absolute; right: -2px; bottom: -2px; width: 5px; height: 5px; background: #14143c; border: 1px solid #fff; }
.tip { position: absolute; z-index: 3; left: 58px; top: 35px; width: 194px; height: 36px; padding: 3px; border: 1px solid #000; background: #ffffe1; text-align: left; font: 10px/13px "DejaVu Sans Condensed", "DejaVu Sans", sans-serif; }
.tip b, .tip span { display: block; }
.tip span { padding-left: 2px; }

/* scroll bars */
.sb { width: 14px; height: 14px; border: 1px solid #e8f0ff; border-radius: 2px; background: linear-gradient(135deg, #d6e3fe, #b3cbfa); }
.sb svg { width: 10px; height: 10px; }
.vscroll { flex: none; width: 14px; display: flex; flex-direction: column; background: #f3f2ec; }
.vtrack { flex: 1; padding-top: 3px; }
.vthumb { height: 80%; border: 1px solid #98b4ee; border-radius: 2px; background: linear-gradient(90deg, #cbdafd, #b8cefb); display: flex; align-items: center; justify-content: center; }
.vthumb span { width: 6px; height: 8px; background: repeating-linear-gradient(#eef4ff 0 1px, #8cb0f8 1px 2px); }

/* sheet tabs */
.tabs { flex: none; display: flex; height: 17px; padding: 0 17px 0 2px; background: #ece9d8; border-top: 1px solid #848070; border-bottom: 1px solid #fff; }
.tabnav { display: flex; width: 60px; }
.tabnav button { width: 15px; flex: 1; }
.tabnav svg { width: 8px; height: 8px; }
.slash { flex: none; width: 8px; height: 16px; }
.tab { width: 79px; height: 15px; border-bottom: 1px solid #8a8672; }
.tab.first { width: 96px; }
.tab.wide { width: 146px; }
.tab.active-tab { width: 80px; background: #fff; font-weight: bold; }
.tab.short { width: 53px; }
.hscroll { margin-left: auto; display: flex; width: 100px; background: #f3f2ec; border-left: 1px solid #000; }
.htrack { flex: 1; padding: 0 8px 0 1px; }
.hthumb { height: 14px; border: 1px solid #98b4ee; border-radius: 2px; background: linear-gradient(#cbdafd, #b8cefb); display: flex; align-items: center; justify-content: center; }
.hthumb span { width: 8px; height: 6px; background: repeating-linear-gradient(90deg, #eef4ff 0 1px, #8cb0f8 1px 2px); }

/* drawing toolbar and status bar */
.draw { height: 26px; padding-top: 1px; padding-bottom: 1px; }
.draw .toolbar { height: 24px; }
.act { width: 62px; }
.shapes { width: 75px; }
.status { flex: none; display: flex; align-items: center; gap: 2px; height: 17px; padding: 0 4px 0 3px; background: #ece9d8; }
.msg { flex: 1; }
.pane { width: 25px; height: 14px; line-height: 12px; text-align: center; border: 1px solid #d4d0c0; }
.w30 { width: 30px; }
.w104 { width: 104px; }
```
